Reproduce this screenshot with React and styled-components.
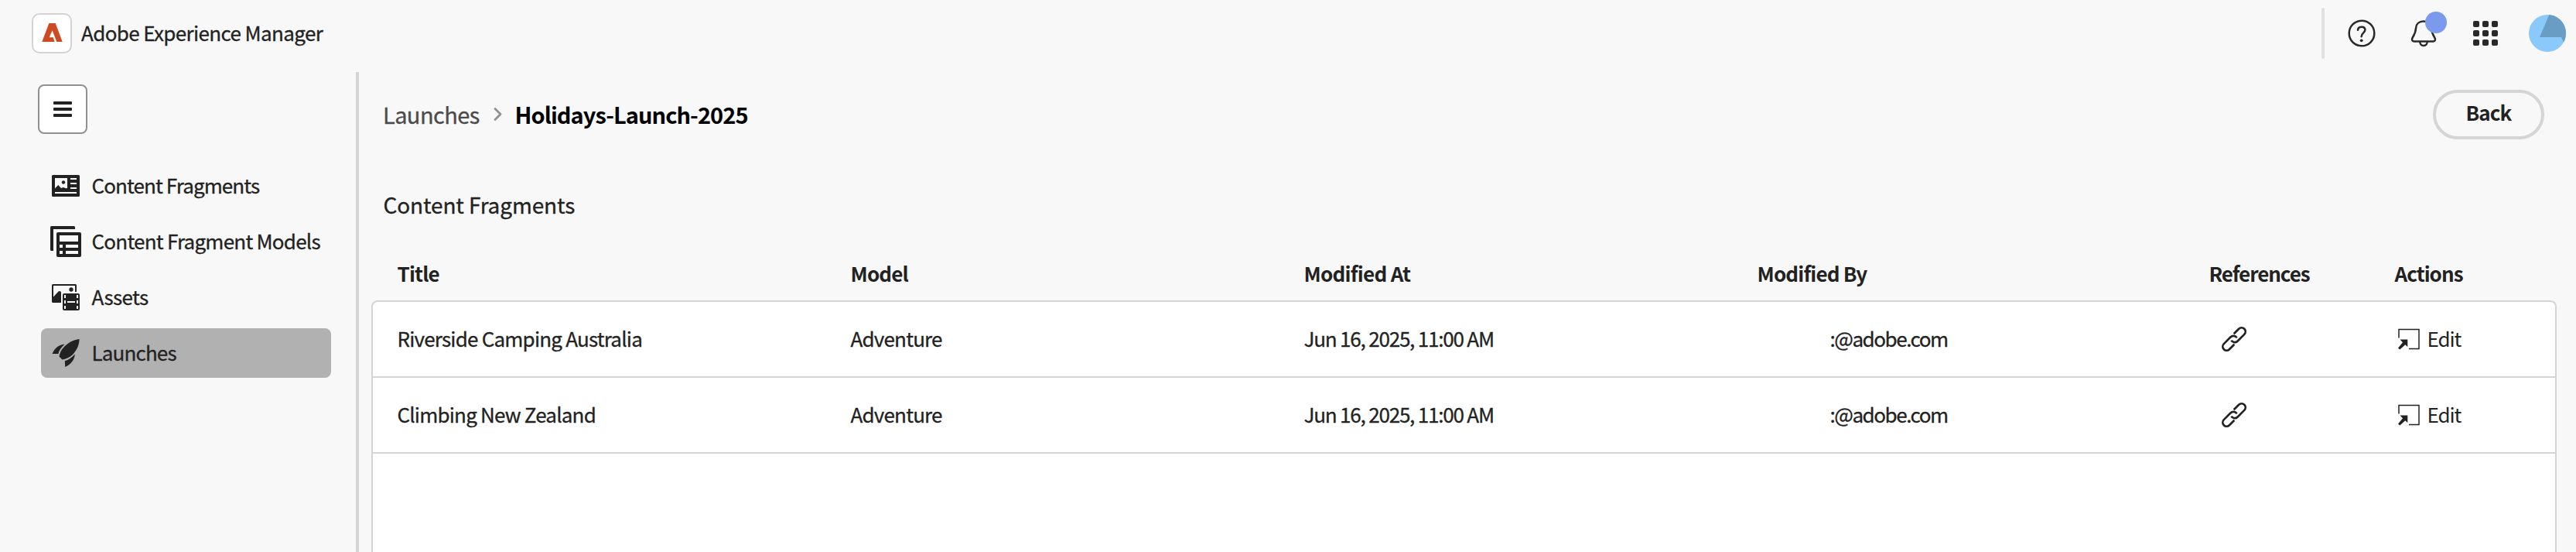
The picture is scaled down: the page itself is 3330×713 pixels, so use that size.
import React from "react";
import styled, { createGlobalStyle, css } from "styled-components";

const ink = "#222222";
const line = "#d5d5d5";
const surface = "#f8f8f8";

const GlobalStyle = createGlobalStyle`
  *, *::before, *::after { box-sizing: border-box; }
  body { margin: 0; background: ${surface}; }
  button { font: inherit; color: inherit; padding: 0; margin: 0; cursor: pointer; }
  svg { display: block; flex: none; overflow: visible; }
`;

const tracking = css`
  letter-spacing: ${(p) => p.$track || 0}px;
  white-space: nowrap;
`;

const sturdy = css`
  -webkit-text-stroke: 0.3px currentColor;
`;

const Page = styled.div`
  display: flex;
  flex-direction: column;
  width: 100%;
  height: 100vh;
  overflow: hidden;
  background: ${surface};
  color: ${ink};
  font-family: "Noto Sans CJK JP", "Noto Sans", sans-serif;
  font-size: 26px;
  line-height: 38px;
`;

/* Top bar */
const TopBar = styled.header`
  display: flex;
  flex: none;
  justify-content: space-between;
  align-items: flex-start;
  height: 93px;
  padding: 0 13px 0 41px;
`;

const Brand = styled.div`
  display: flex;
  gap: 12px;
  padding-top: 17px;
`;

const LogoTile = styled.div`
  display: grid;
  place-items: center;
  width: 52px;
  height: 52px;
  padding-bottom: 2px;
  border: 2px solid #d3d3d3;
  border-radius: 10px;
  background: #fff;
`;

const BrandName = styled.span`
  padding-top: 6px;
  ${sturdy}
  ${tracking}
`;

const Tools = styled.div`
  display: flex;
  align-items: center;
  height: 66px;
  margin-top: 10px;
`;

const Divider = styled.span`
  width: 4px;
  height: 66px;
  margin-right: 30px;
  border-radius: 2px;
  background: #e1e1e1;
`;

const IconButton = styled.button`
  position: relative;
  display: grid;
  place-items: center;
  width: 36px;
  height: 36px;
  margin-right: ${(p) => p.$gap}px;
  border: 0;
  background: none;
`;

const Badge = styled.span`
  position: absolute;
  top: -10px;
  right: -12px;
  width: 28px;
  height: 28px;
  border-radius: 50%;
  background: #7b9aee;
`;

const AppGrid = styled.span`
  display: grid;
  grid-template-columns: repeat(3, 8px);
  grid-auto-rows: 8px;
  gap: 4px;
`;

const AppDot = styled.span`
  border-radius: 2px;
  background: #292929;
`;

/* Body */
const Body = styled.div`
  display: flex;
  flex: 1;
  min-height: 0;
`;

const Sidebar = styled.aside`
  flex: none;
  width: 464px;
  padding: 16px 32px 0 49px;
  border-right: 4px solid ${line};
`;

const MenuButton = styled.button`
  display: flex;
  flex-direction: column;
  align-items: center;
  justify-content: center;
  gap: 4px;
  width: 64px;
  height: 64px;
  border: 2px solid #909090;
  border-radius: 8px;
  background: #fff;
`;

const MenuBar = styled.span`
  width: 24px;
  height: 4px;
  border-radius: 1px;
  background: ${ink};
`;

const Nav = styled.nav`
  display: flex;
  flex-direction: column;
  gap: 8px;
  margin: 35px 0 0 4px;
`;

const NavItem = styled.a`
  display: flex;
  align-items: center;
  gap: 13.5px;
  width: 375px;
  height: 64px;
  padding-left: 12px;
  border-radius: 8px;
  background: ${(p) => (p.$active ? "#b1b1b1" : "transparent")};
`;

const NavIcon = styled.span`
  display: grid;
  place-items: center;
  width: 40px;
  height: 40px;
`;

const NavLabel = styled.span`
  padding-bottom: 3px;
  ${sturdy}
  ${tracking}
`;

const Main = styled.main`
  display: flex;
  flex: 1;
  flex-direction: column;
  padding: 0 25px 0 16px;
`;

const TitleRow = styled.div`
  display: flex;
  flex: none;
  align-items: center;
  justify-content: space-between;
  height: 64px;
  margin-top: 23px;
  padding: 0 16px 0 15px;
`;

const Breadcrumb = styled.div`
  display: flex;
  align-items: center;
  padding-bottom: 2px;
  font-size: 29px;
  line-height: 42px;
`;

const Crumb = styled.span`
  color: ${(p) => (p.$current ? "#000" : "#4b4b4b")};
  font-weight: ${(p) => (p.$current ? 700 : 400)};
  ${(p) => !p.$current && sturdy}
  ${tracking}
`;

const BackButton = styled.button`
  width: 144px;
  height: 64px;
  padding-bottom: 6px;
  border: 4px solid ${line};
  border-radius: 32px;
  background: none;
  font-weight: 700;
  ${tracking}
`;

const SectionTitle = styled.h2`
  flex: none;
  height: 140px;
  margin: 0;
  padding: 63px 0 0 15.5px;
  font-size: 28px;
  font-weight: 400;
  line-height: 43px;
  ${sturdy}
  ${tracking}
`;

const rowGrid = css`
  display: grid;
  grid-template-columns: 586px 586px 586px 584px 240px 1fr;
  align-items: center;
  padding-bottom: 3px;
`;

const HeadRow = styled.div`
  ${rowGrid}
  flex: none;
  height: 68px;
  padding-left: 33.5px;
  font-weight: 700;
`;

const Table = styled.div`
  flex: 1;
  border: 2px solid ${line};
  border-bottom: 0;
  border-radius: 8px 8px 0 0;
  background: #fff;
`;

const Row = styled.div`
  ${rowGrid}
  height: 98px;
  padding-left: 31.5px;
  border-bottom: 2px solid ${line};
`;

const Cell = styled.div`
  padding-left: ${(p) => p.$indent || 0}px;
  ${tracking}
  ${Row} & {
    ${sturdy}
  }
`;

const ReferenceCell = styled.div`
  padding: 3px 0 0 16px;
`;

const EditAction = styled.a`
  display: flex;
  align-items: center;
  gap: 9px;
  padding-left: 3px;
  ${tracking}

  svg {
    margin-top: 2px;
  }
`;

/* Icons */
const Logo = () => (
  <svg width="27" height="24" viewBox="0 0 79 72">
    <path fill="#cc4b22" d="M0 72 27 0H52L79 72H57L40 28 28 55H43L49 72Z" />
  </svg>
);

const HelpIcon = () => (
  <svg width="36" height="36" viewBox="0 0 36 36" fill="none" stroke="#292929" strokeWidth="2.5" strokeLinecap="round">
    <circle cx="18" cy="18" r="16.3" />
    <path d="M13 13.8c.2-2.6 2-4.1 4.8-4.1 2.7 0 4.6 1.5 4.6 3.9 0 3.6-4.8 4-4.8 8.6" />
    <circle cx="17.7" cy="27.3" r="1.9" fill="#292929" stroke="none" />
  </svg>
);

const BellIcon = () => (
  <svg width="36" height="36" viewBox="0 0 36 36" fill="none" stroke="#292929" strokeWidth="2.5">
    <path d="M18 2.5c-6 0-9.6 3.400-9.9 8.5-.3 6-2 8.8-4.3 12.5C2.2 26 3 28.5 5.5 28.5h25c2.5 0 3.3-2.500 1.700-5-2.300-3.700-4-6.500-4.300-12.500-.3-5.100-3.900-8.500-9.900-8.500Z" />
    <path d="M13.3 29c0 3 1.900 5 4.700 5s4.700-2 4.700-5" />
  </svg>
);

const Avatar = () => (
  <svg width="48" height="48" viewBox="0 0 48 48">
    <circle cx="24" cy="24" r="24" fill="#8ac9fa" />
    <path fill="#6a9dc3" d="M26.3 0A24 24 0 0 1 45 35.5L42 29H14Z" />
  </svg>
);

const FragmentIcon = () => (
  <svg width="36" height="28" viewBox="0 0 36 28">
    <rect width="36" height="28" rx="1.5" fill={ink} />
    <path fill={surface} d="M4 4H20V17L18 17.2 15 16 12 17 8.2 13 4 17.5Z" />
    <circle cx="15" cy="9.5" r="2.2" fill={ink} />
    <path fill={surface} d="M24 4h8v2h-8zM24 10h8v2h-8zM24 16h8v2h-8zM4 22h28v2H4z" />
  </svg>
);

const ModelIcon = () => (
  <svg width="40" height="40" viewBox="0 0 40 40" fill={ink}>
    <path d="M1.5 0H30.5Q32 0 32 1.5V4H4V32H1.5Q0 32 0 30.5V1.5Q0 0 1.5 0Z" />
    <rect x="8" y="8" width="32" height="32" rx="2" />
    <path fill={surface} d="M12 12h24v8H12zM12 24h4v4h-4zM20 24h16v4H20zM12 32h4v4h-4zM20 32h16v4H20z" />
  </svg>
);

const AssetsIcon = () => (
  <svg width="36" height="34" viewBox="0 0 36 34" fill={ink}>
    <path fillRule="evenodd" d="M1.5 0H30.5Q32 0 32 1.5V10H30V2H2V16.5L8.5 9.5Q10 8.5 12 10V24H1.5Q0 24 0 22.5V1.5Q0 0 1.5 0Z" />
    <circle cx="25" cy="7" r="2.7" />
    <rect x="14" y="12" width="22" height="22" rx="2" />
    <path fill={surface} d="M16 14h2v4h-2zM16 21h2v4h-2zM16 28h2v4h-2zM32 14h2v4h-2zM32 21h2v4h-2zM32 28h2v4h-2zM20 22h10v2H20z" />
  </svg>
);

const RocketIcon = () => (
  <svg width="36" height="36" viewBox="0 0 36 36" fill={ink}>
    <path d="M35.6 0C35.5 8 31.5 15.5 26.5 20.5 22.5 24 18 25.5 13.5 26.5L9.5 22.5C10 18.5 12 14 15.5 10.5 20.5 5 27.5.7 35.6 0Z" />
    <path d="M.5 19C4 11 9.5 7 16.5 6.7 12.500 10.5 9.500 14 8.300 19Z" />
    <path d="M29.8 19.5C29.5 27 24 33 17.200 36L16.800 28.200C21.500 27 26 24 29.800 19.500Z" />
  </svg>
);

const ChevronIcon = () => (
  <svg width="46" height="18" viewBox="0 0 46 18" fill="none" stroke="#909090" strokeWidth="2.8" strokeLinecap="round" strokeLinejoin="round">
    <path d="M20 2.500 27 9.500 20 16.500" />
  </svg>
);

const LinkIcon = () => (
  <svg width="32" height="32" viewBox="0 0 32 32" fill="none" stroke={ink} strokeWidth="2.7">
    <g transform="translate(16 16) rotate(-45)">
      <path d="M4.5-5H13.7A5 5 0 0 1 13.7 5H1.2A5 5 0 0 1-3.6-1.4" />
      <path d="M-4.5 5H-13.7A5 5 0 0 1-13.7-5H-1.2A5 5 0 0 1 3.6 1.4" />
    </g>
  </svg>
);

const OpenInIcon = () => (
  <svg width="30" height="28" viewBox="0 0 30 28">
    <path fill="none" stroke={ink} strokeWidth="1.5" d="M2 12.5V1.500H28V26.500H15" />
    <path fill={ink} d="M3.500 14.500H13.300V24L10.200 21.200 3.300 27.600 1 25.500 7 18.200Z" />
  </svg>
);

/* Data */
const navItems = [
  { label: "Content Fragments", icon: FragmentIcon, track: -0.9 },
  { label: "Content Fragment Models", icon: ModelIcon, track: -0.76 },
  { label: "Assets", icon: AssetsIcon, track: -0.6 },
  { label: "Launches", icon: RocketIcon, track: -0.85, active: true },
];

const columns = [
  { label: "Title", track: -0.8 },
  { label: "Model", track: -0.8 },
  { label: "Modified At", track: -0.7 },
  { label: "Modified By", track: -0.8 },
  { label: "References", track: -1.05 },
  { label: "Actions", track: -0.95 },
];

const fragments = [
  { title: "Riverside Camping Australia", model: "Adventure", date: "Jun 16, 2025, 11:00 AM", by: ":@adobe.com" },
  { title: "Climbing New Zealand", model: "Adventure", date: "Jun 16, 2025, 11:00 AM", by: ":@adobe.com" },
];

export default function App() {
  return (
    <Page>
      <GlobalStyle />
      <TopBar>
        <Brand>
          <LogoTile><Logo /></LogoTile>
          <BrandName $track={-0.63}>Adobe Experience Manager</BrandName>
        </Brand>
        <Tools>
          <Divider />
          <IconButton $gap={44} aria-label="Help"><HelpIcon /></IconButton>
          <IconButton $gap={44} aria-label="Notifications"><BellIcon /><Badge /></IconButton>
          <IconButton $gap={38} aria-label="Apps">
            <AppGrid>
              {Array.from({ length: 9 }, (_, i) => <AppDot key={i} />)}
            </AppGrid>
          </IconButton>
          <Avatar />
        </Tools>
      </TopBar>
      <Body>
        <Sidebar>
          <MenuButton aria-label="Menu"><MenuBar /><MenuBar /><MenuBar /></MenuButton>
          <Nav>
            {navItems.map(({ label, icon: Icon, track, active }) => (
              <NavItem key={label} $active={active}>
                <NavIcon><Icon /></NavIcon>
                <NavLabel $track={track}>{label}</NavLabel>
              </NavItem>
            ))}
          </Nav>
        </Sidebar>
        <Main>
          <TitleRow>
            <Breadcrumb>
              <Crumb $track={-0.6}>Launches</Crumb>
              <ChevronIcon />
              <Crumb $current $track={-0.95}>Holidays-Launch-2025</Crumb>
            </Breadcrumb>
            <BackButton $track={-0.9}>Back</BackButton>
          </TitleRow>
          <SectionTitle $track={-0.13}>Content Fragments</SectionTitle>
          <HeadRow>
            {columns.map((c) => <Cell key={c.label} $track={c.track}>{c.label}</Cell>)}
          </HeadRow>
          <Table>
            {fragments.map((f) => (
              <Row key={f.title}>
                <Cell $track={-0.8}>{f.title}</Cell>
                <Cell $track={-0.8}>{f.model}</Cell>
                <Cell $track={-1.2}>{f.date}</Cell>
                <Cell $track={-1.45} $indent={94}>{f.by}</Cell>
                <ReferenceCell><LinkIcon /></ReferenceCell>
                <EditAction $track={-1.1}><OpenInIcon />Edit</EditAction>
              </Row>
            ))}
          </Table>
        </Main>
      </Body>
    </Page>
  );
}
